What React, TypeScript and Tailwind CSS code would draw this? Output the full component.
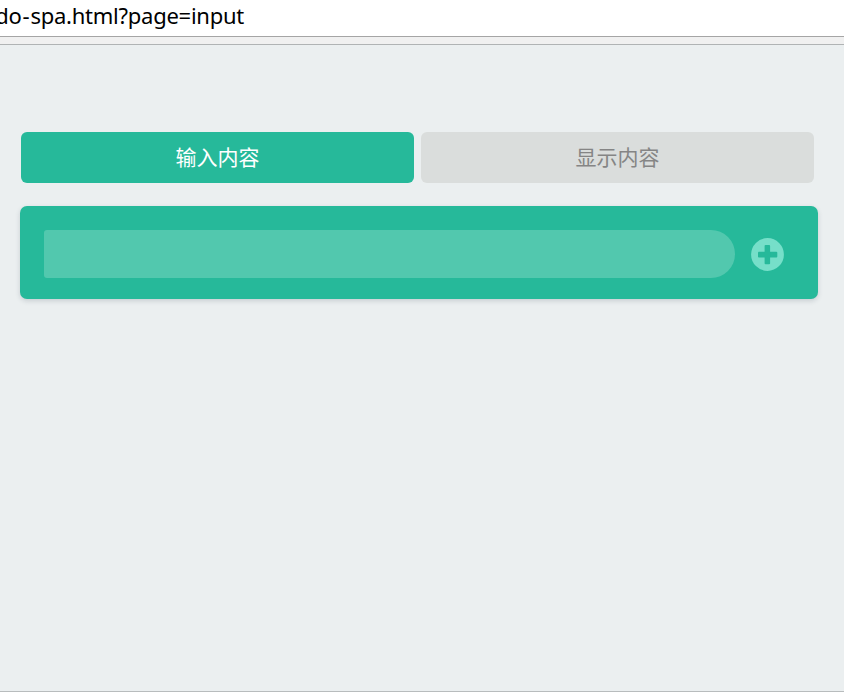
const tabs = [
  { label: "输入内容", style: "bg-[#26b99a] text-white" },
  { label: "显示内容", style: "bg-[#dadddc] text-[#858585]" },
];

function AddressBar() {
  return (
    <div className="flex h-[37px] shrink-0 overflow-hidden border-b border-[#a5a5a5] bg-white">
      <div className="-ml-2 flex h-[30px] w-[252px] justify-end whitespace-nowrap font-['Noto_Sans',sans-serif] text-[22px] leading-[30px] tracking-[-0.25px] text-black">
        <span>
          <span className="mr-px">do</span>
          <span className="mr-px">-</span>spa.html?page=input
        </span>
      </div>
    </div>
  );
}

function AddIcon() {
  return (
    <svg width="33" height="33" viewBox="0 0 33 33" aria-hidden="true">
      <circle cx="16.5" cy="16.5" r="16.4" fill="#76dfc9" />
      <rect x="7" y="13.8" width="19.3" height="5.7" rx="0.9" fill="#26b99a" />
      <rect x="13.6" y="7" width="5.5" height="19.2" rx="0.9" fill="#26b99a" />
    </svg>
  );
}

export default function App() {
  return (
    <div className="flex h-[692px] w-[844px] flex-col overflow-hidden bg-[#ebeff0]">
      <AddressBar />
      <div className="h-2 shrink-0 border-b border-[#b0b3b4] bg-[#f0f0f0]" />
      <main className="flex grow flex-col border-b border-[#b8bcbd] pt-[87px]">
        <nav className="ml-[21px] flex gap-[7px]">
          {tabs.map((tab) => (
            <button
              key={tab.label}
              className={`h-[51px] w-[393px] rounded-[6px] pb-0.5 font-['Noto_Sans_CJK_SC',sans-serif] text-[21px] font-normal leading-[49px] ${tab.style}`}
            >
              {tab.label}
            </button>
          ))}
        </nav>
        <form className="ml-5 mt-[23px] flex h-[93px] w-[798px] rounded-[7px] bg-[#26b99a] pl-6 pt-6 shadow-[0_2px_5px_rgba(44,62,80,0.18)]">
          <input
            type="text"
            aria-label="输入内容"
            className="h-12 w-[691px] rounded-l-[3px] rounded-r-[24px] bg-[#52c8ae] px-4 text-white outline-none"
          />
          <button type="button" className="ml-4 mt-2 h-[33px] w-[33px]">
            <AddIcon />
          </button>
        </form>
      </main>
    </div>
  );
}
